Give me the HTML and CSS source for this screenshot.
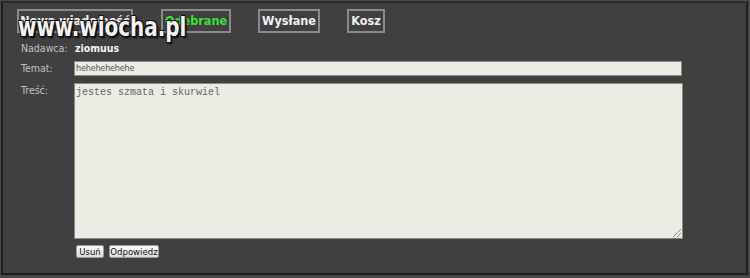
FILE: index.html
```html
<!DOCTYPE html>
<html>
<head>
<meta charset="utf-8">
<link rel="stylesheet" href="styles.css">
</head>
<body>
<div class="frame">
  <div class="tabs">
    <span class="tab t1">Nowa wiadomość</span>
    <span class="tab t2 active">Odebrane</span>
    <span class="tab t3">Wysłane</span>
    <span class="tab t4">Kosz</span>
  </div>
  <div class="row sender"><span class="label">Nadawca:</span><b class="name">ziomuus</b></div>
  <div class="row"><span class="label">Temat:</span><div class="input">hehehehehehe</div></div>
  <div class="row"><span class="label">Treść:</span><div class="textarea">jestes szmata i skurwiel<span class="grip"></span></div></div>
  <div class="buttons"><button class="btn b1">Usuń</button><button class="btn b2">Odpowiedz</button></div>
  <div class="watermark">www.wiocha.pl</div>
</div>
</body>
</html>
```
FILE: styles.css
```css
html, body { margin: 0; padding: 0; background: #474747; }
body { width: 750px; height: 278px; overflow: hidden; }
.frame {
  position: relative;
  box-sizing: border-box;
  width: 747px; height: 274px;
  margin: 1px 0 0 1px;
  background: #404040;
  border: 2px solid #1e1e1e;
  border-top-color: #2a2a2a;
  padding: 6px 0 0 14px;
  font-family: "DejaVu Sans Condensed", Tahoma, sans-serif;
  font-size: 10.5px;
  color: #c8c8c8;
}
.tabs { display: flex; height: 24px; margin-bottom: 8px; }
.tab {
  box-sizing: border-box;
  height: 24px; line-height: 20px;
  border: 2px solid #8a8a8a;
  color: #f0f0f0;
  font-weight: bold; font-size: 12.5px;
  text-align: center;
  white-space: nowrap; overflow: hidden;
  margin-right: 27px;
}
.t1 { width: 116px; margin-right: 28px; }
.t2 { width: 70px; }
.t3 { width: 62px; }
.t4 { width: 38px; }
.tab.active { color: #39e239; }
.row { display: flex; align-items: flex-start; }
.label { box-sizing: border-box; width: 57px; padding-left: 4px; color: #c0c0c0; line-height: 14px; }
.sender { height: 14px; margin-bottom: 6px; }
.sender .label { width: 58px; }
.name { color: #f4f4f4; font-weight: bold; line-height: 14px; }
.input {
  box-sizing: border-box;
  width: 608px; height: 15px;
  background: #ecebe4;
  border: 1px solid #8a8a8a;
  font-family: "DejaVu Sans Condensed", Tahoma, sans-serif;
  font-size: 9px; line-height: 13px;
  letter-spacing: -0.2px;
  color: #555;
  padding-left: 1px;
  margin-bottom: 7px;
}
.textarea {
  position: relative;
  box-sizing: border-box;
  width: 609px; height: 156px;
  background: #ecebe4;
  border: 1px solid #8a8a8a;
  font-family: "Liberation Mono", monospace;
  font-size: 10px; line-height: 12px;
  color: #666;
  padding: 3px 1px;
}
.grip {
  position: absolute; right: 1px; bottom: 1px;
  width: 8px; height: 8px;
  background: linear-gradient(135deg, transparent 45%, #888 45%, #888 55%, transparent 55%, transparent 70%, #888 70%, #888 80%, transparent 80%);
}
.buttons { display: flex; gap: 5px; margin: 6px 0 0 59px; }
.btn {
  box-sizing: border-box;
  height: 13px; padding: 0;
  font-family: "DejaVu Sans Condensed", Tahoma, sans-serif;
  font-size: 9.5px; line-height: 11px;
  color: #111;
  background: linear-gradient(#fafafa, #dcdcdc);
  border: 1px solid #9a9a9a;
  border-radius: 2px;
}
.b1 { width: 28px; }
.b2 { width: 50px; }
.watermark {
  position: absolute; left: 15px; top: 8px;
  font-family: "DejaVu Sans Condensed", Verdana, sans-serif;
  font-weight: bold; font-size: 27px;
  transform: scaleX(0.82);
  transform-origin: left top;
  color: #f2f2f2;
  white-space: nowrap;
  text-shadow: -1px -1px 0 #111, 1px -1px 0 #111, -1px 1px 0 #111, 1px 1px 0 #111, 2px 2px 2px #000;
}
```
